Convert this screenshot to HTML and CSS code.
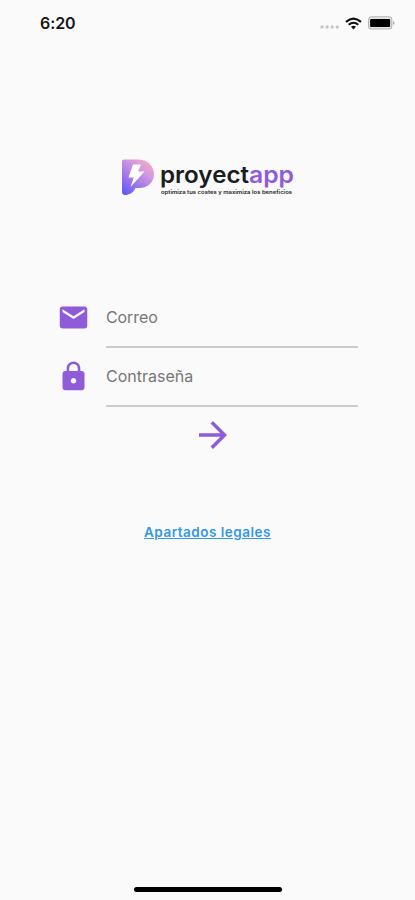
FILE: index.html
```html
<!DOCTYPE html>
<html lang="es">
<head>
<meta charset="utf-8">
<meta name="viewport" content="width=device-width, initial-scale=1">
<title>proyectapp</title>
<link rel="stylesheet" href="styles.css">
</head>
<body>
<div class="screen">
  <header class="status">
    <span class="time">6:20</span>
    <div class="indicators">
      <svg class="signal" width="20" height="4" viewBox="0 0 20 4" fill="#c4c4c4"><rect x="0.5" y="0.5" width="3" height="3" rx="1"/><rect x="5.6" y="0.5" width="3" height="3" rx="1"/><rect x="10.7" y="0.5" width="3" height="3" rx="1"/><rect x="15.8" y="0.5" width="3" height="3" rx="1"/></svg>
      <svg class="wifi" width="17" height="13" viewBox="0 0 17 13" fill="none" stroke="#111" stroke-width="2.1"><path d="M1 4.900Q8.500-1.800 16 4.900M3.700 7.800Q8.500 3.700 13.300 7.800"/><path d="M8.500 12.400L6 9.800Q8.500 7.800 11 9.800Z" fill="#111" stroke="none"/></svg>
      <svg class="battery" width="27" height="14" viewBox="0 0 27 14"><rect x="0.6" y="0.7" width="23.2" height="12.3" rx="3" fill="#e4e4e4" stroke="#b5b5b5" stroke-width="1.1"/><rect x="2.1" y="2.9" width="20" height="8" rx="1" fill="#000"/><path d="M25 5Q26.600 6 26.600 7T25 9Z" fill="#aaa"/></svg>
    </div>
  </header>
  <main class="login">
    <svg class="logo" width="176" height="42" viewBox="0 0 176 42">
      <defs>
        <linearGradient id="mark" x1="0.1" y1="1" x2="0.75" y2="0.05"><stop offset="0" stop-color="#5f58fa"/><stop offset="0.4" stop-color="#a078ea"/><stop offset="0.75" stop-color="#d298e2"/><stop offset="1" stop-color="#f0a8c4"/></linearGradient>
      </defs>
      <path d="M4 2.500H18C27 2.500 34 8.500 34 17S27.500 31 19.500 31H15.500C13 36 9 38 5 38Q2 38 2 34.500V4.500Q2 2.500 4 2.500Z" fill="url(#mark)"/>
      <path d="M13 7.500H21L18 14.500H24.500L10.500 30L13.800 20.500H8.500Z" fill="#fff"/>
      <text class="brand" x="40" y="26" textLength="89" lengthAdjust="spacingAndGlyphs">proyect</text>
      <text class="brand accent" x="129" y="26" textLength="45" lengthAdjust="spacingAndGlyphs">app</text>
      <text class="tagline" x="41" y="37" textLength="131" lengthAdjust="spacingAndGlyphs">optimiza tus costes y maximiza los beneficios</text>
    </svg>
    <form class="fields">
      <label class="row">
        <svg class="icon" viewBox="0 0 24 24"><path d="M20 4H4c-1.100 0-1.990.9-1.990 2L2 18c0 1.100.9 2 2 2h16c1.100 0 2-.9 2-2V6c0-1.100-.9-2-2-2zm0 4l-8 5-8-5V6l8 5 8-5v2z"/></svg>
        <span class="field"><span class="correo">Correo</span></span>
      </label>
      <label class="row">
        <svg class="icon" viewBox="0 0 24 24"><path d="M18 8h-1V6c0-2.760-2.240-5-5-5S7 3.240 7 6v2H6c-1.100 0-2 .9-2 2v10c0 1.100.9 2 2 2h12c1.100 0 2-.9 2-2V10c0-1.100-.9-2-2-2zm-6 9c-1.100 0-2-.9-2-2s.9-2 2-2 2 .9 2 2-.9 2-2 2zm3.100-9H8.900V6c0-1.710 1.390-3.100 3.100-3.100s3.100 1.390 3.100 3.100v2z"/></svg>
        <span class="field"><span class="clave">Contraseña</span></span>
      </label>
    </form>
    <button class="submit" type="button" aria-label="Entrar">
      <svg width="42" height="42" viewBox="0 0 24 24"><path d="M12 4l-1.410 1.410L16.170 11H4v2h12.170l-5.580 5.590L12 20l8-8z"/></svg>
    </button>
    <a class="legal" href="#">Apartados legales</a>
  </main>
  <div class="home"></div>
</div>
</body>
</html>
```
FILE: styles.css
```css
* { box-sizing: border-box; }
body { margin: 0; background: #fafafa; font-family: Inter, "Liberation Sans", sans-serif; }
.screen { height: 900px; display: flex; flex-direction: column; overflow: hidden; }
.status { height: 46px; flex: none; display: flex; justify-content: space-between; align-items: center; padding: 0 20px 0 40px; }
.time { font-size: 16px; font-weight: 600; color: #151515; letter-spacing: -0.1px; }
.indicators { display: flex; align-items: center; }
.signal { margin: 8px 5px 0 0; }
.wifi { margin-right: 6px; }
.login { flex: 1; display: flex; flex-direction: column; align-items: center; padding-top: 111px; }
.logo { display: block; margin-left: 1px; }
.brand { font-family: Inter, sans-serif; font-size: 23px; font-weight: 600; fill: #191c20; }
.accent { fill: #8f5bdb; }
.tagline { font-family: Inter, sans-serif; font-size: 5px; font-weight: 600; fill: #222; }
.fields { width: 415px; margin-top: 90px; padding: 0 57px; }
.row { display: flex; align-items: center; height: 59px; }
.icon { width: 33px; height: 33px; flex: none; fill: #905bd8; margin: 0 16px 2px 0; }
.field { flex: 1; height: 59px; line-height: 57px; border-bottom: 2px solid #cbcbcb; font-size: 16px; color: #777; }
.correo { letter-spacing: -0.1px; }
.clave { letter-spacing: 0; }
.submit { border: 0; background: none; padding: 0; margin: 7px 0 0 11px; width: 42px; height: 42px; }
.submit svg { display: block; fill: #905bd8; }
.legal { margin-top: 66px; font-size: 13.5px; line-height: 20px; font-weight: 600; letter-spacing: 0.5px; color: #3497e4; text-decoration: underline; }
.home { width: 148px; height: 5px; flex: none; align-self: center; border-radius: 3px; background: #000; margin-bottom: 8px; }
```
